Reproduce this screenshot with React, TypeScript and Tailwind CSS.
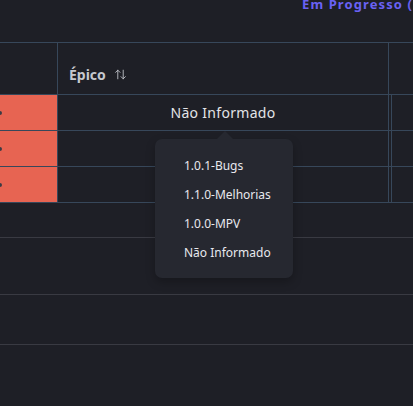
import { ArrowUpDown } from "lucide-react";

const font = { fontFamily: "'Noto Sans', 'Open Sans', sans-serif" };

function BodyRow({ label }: { label?: string }) {
  return (
    <div className="flex h-[36px] border-b border-[#37475a]">
      <div className="relative w-[58px] shrink-0 border-r border-[#37475a] bg-[#e76452]">
        <span className="absolute left-[-2px] top-[16px] h-[4px] w-[4px] rounded-full bg-[#3b3b44]" />
      </div>
      <div className="flex w-[331px] shrink-0 items-center justify-center border-r border-[#37475a] text-[14px] tracking-[0.3px] text-[#e3e4e8]">
        {label}
      </div>
      <div className="w-[2px] shrink-0" />
      <div className="flex-1 border-l border-[#37475a]" />
    </div>
  );
}

export default function App() {
  return (
    <div
      className="relative h-[406px] w-[413px] overflow-hidden bg-[#1e1f26]"
      style={font}
    >
      <div className="flex h-[42px] justify-start overflow-hidden pl-[302px]">
        <span className="-mt-[5px] whitespace-nowrap text-[13px] font-bold tracking-[1.1px] text-[#6a62f4]">
          Em Progresso (
        </span>
      </div>

      <div className="border-t border-[#37475a]">
        <div className="flex h-[52px] border-b border-[#37475a]">
          <div className="w-[58px] shrink-0 border-r border-[#37475a]" />
          <div className="flex w-[331px] shrink-0 items-center gap-[8px] border-r border-[#37475a] pl-[11px] pt-[12px]">
            <span className="text-[14px] font-bold text-[#c6c9cf]">Épico</span>
            <ArrowUpDown size={13} strokeWidth={1.6} className="text-[#c6c9cf]" />
          </div>
          <div className="flex-1" />
        </div>
        <BodyRow label="Não Informado" />
        <BodyRow />
        <BodyRow />
      </div>

      <div className="h-[35px] border-b border-[#393a42]" />
      <div className="h-[57px] border-b border-[#393a42]" />
      <div className="h-[50px] border-b border-[#393a42]" />

      <div className="absolute left-[155px] top-[139px] flex h-[139px] w-[138px] flex-col gap-[10px] rounded-[7px] bg-[#262830] pl-[29px] pt-[17px] text-[12px] text-[#e8e9ee] shadow-[0_4px_10px_rgba(0,0,0,0.25)]">
        <span
          className="absolute left-[62px] top-[-8px] h-0 w-0 border-x-[8px] border-b-[8px] border-x-transparent border-b-[#262830]"
        />
        <span className="leading-[19px]">1.0.1-Bugs</span>
        <span className="leading-[19px]">1.1.0-Melhorias</span>
        <span className="leading-[19px]">1.0.0-MPV</span>
        <span className="leading-[19px]">Não Informado</span>
      </div>
    </div>
  );
}
